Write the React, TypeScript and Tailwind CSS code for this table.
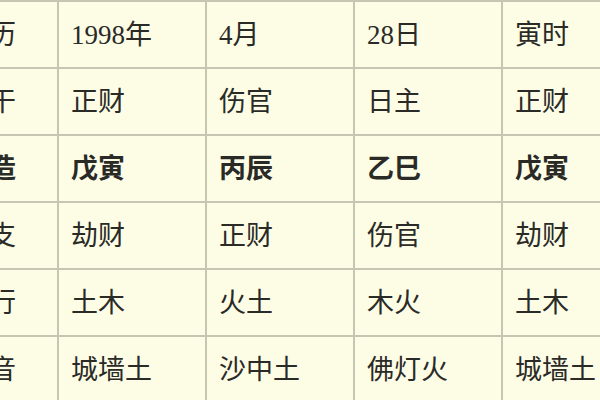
const rows: { label: string; cells: string[]; bold?: boolean }[] = [
  { label: "公历", cells: ["1998年", "4月", "28日", "寅时"] },
  { label: "天干", cells: ["正财", "伤官", "日主", "正财"] },
  { label: "乾造", cells: ["戊寅", "丙辰", "乙巳", "戊寅"], bold: true },
  { label: "地支", cells: ["劫财", "正财", "伤官", "劫财"] },
  { label: "五行", cells: ["土木", "火土", "木火", "土木"] },
  { label: "纳音", cells: ["城墙土", "沙中土", "佛灯火", "城墙土"] },
];

export default function App() {
  return (
    <div
      className="w-[600px] h-[400px] overflow-hidden bg-[#fdfde6] text-[#2a2a26]"
      style={{ fontFamily: '"Liberation Serif", "Noto Sans CJK SC", serif' }}
    >
      <div className="-ml-[50px] w-max bg-[#c6c6b3] pt-[2px] grid grid-cols-[107px_146px_146px_146px_146px] gap-[2px]">
        {rows.map((row) => (
          <div key={row.label} className="contents">
            <div
              className={`h-[65px] bg-[#fdfde6] flex items-center pl-3 pt-[2px] text-[27px] ${row.bold ? "font-bold" : ""}`}
            >
              {row.label}
            </div>
            {row.cells.map((c, i) => (
              <div
                key={i}
                className={`h-[65px] bg-[#fdfde6] flex items-center pl-3 pt-[2px] text-[27px] ${row.bold ? "font-bold" : ""}`}
              >
                {c}
              </div>
            ))}
          </div>
        ))}
      </div>
    </div>
  );
}
